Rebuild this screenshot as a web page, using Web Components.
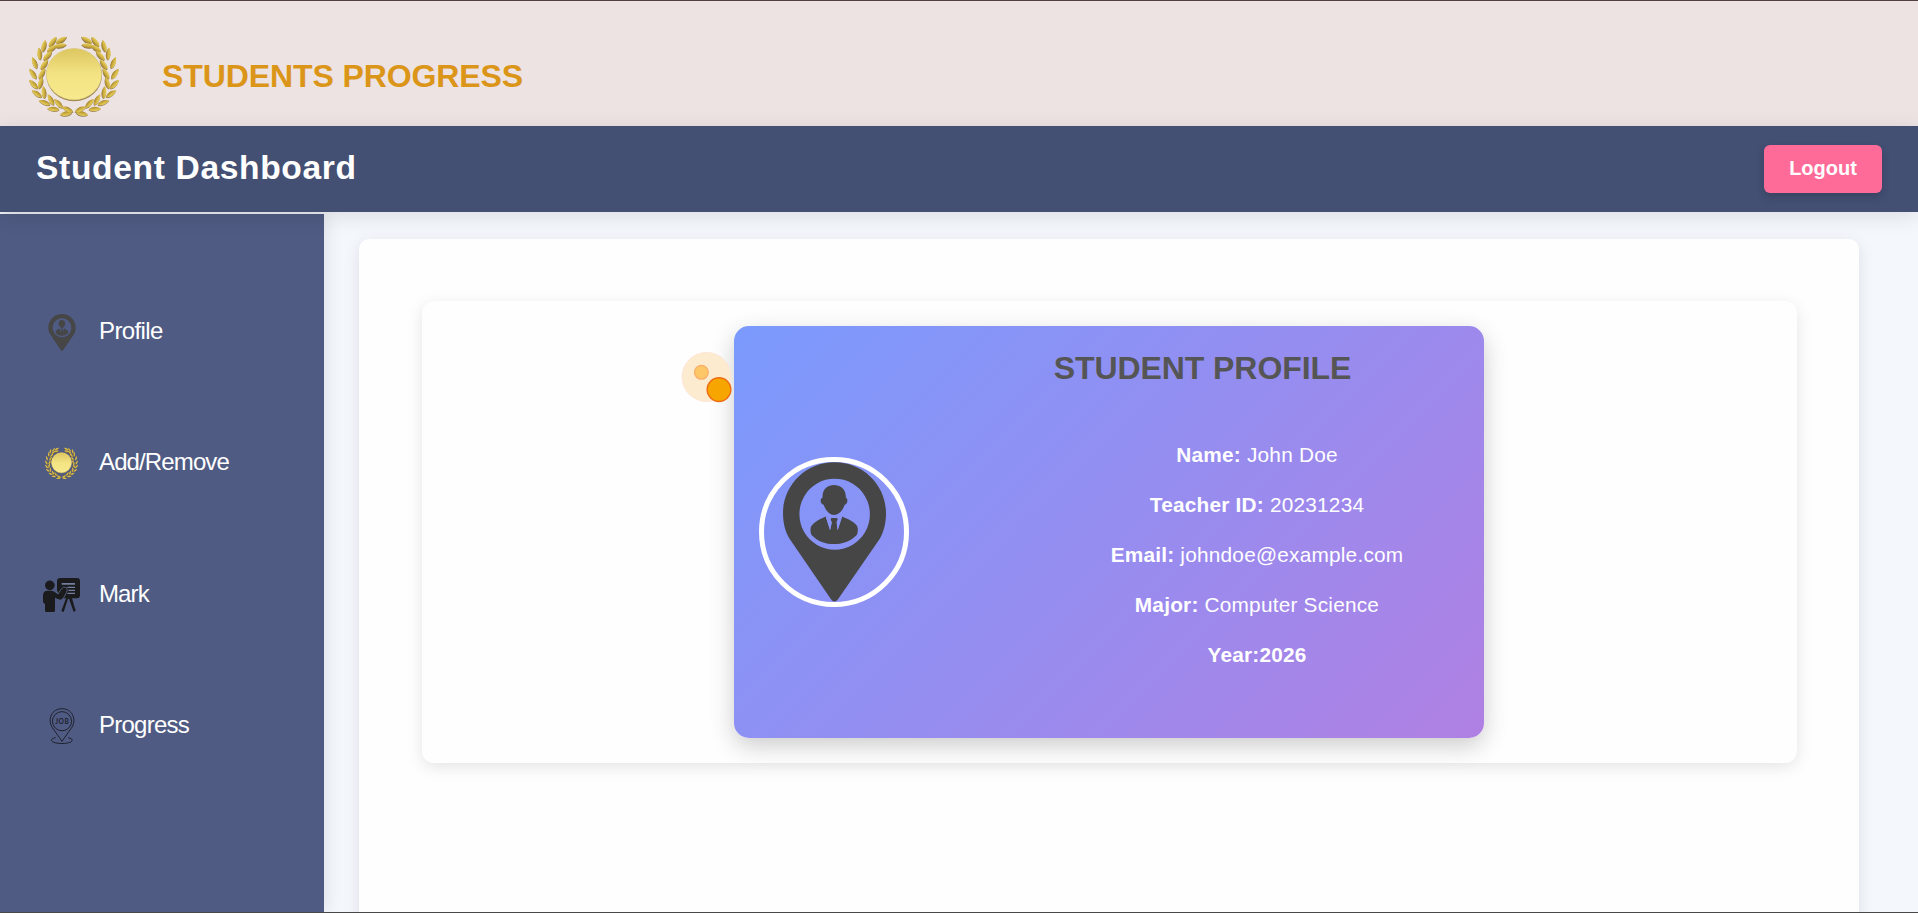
<!DOCTYPE html>
<html lang="en">
<head>
<meta charset="utf-8">
<title>Student Dashboard</title>
<style>
html,body{margin:0;height:100%;overflow:hidden}
body{font-family:"Liberation Sans",Arial,sans-serif;background:#f4f7fc}
</style>
</head>
<body>
<student-app></student-app>
<script>
function define(name, html, setup){
  const t=document.createElement('template');
  t.innerHTML=html;
  customElements.define(name, class extends HTMLElement{
    constructor(){
      super();
      this.attachShadow({mode:'open'}).appendChild(t.content.cloneNode(true));
    }
    connectedCallback(){ if(setup) setup(this,this.shadowRoot); }
  });
}

define('pin-icon', `
<style>:host{display:block}svg{display:block;width:100%;height:100%}</style>
<svg viewBox="338 458 307 416" preserveAspectRatio="xMidYMid meet" fill="#464646">
<path fill-rule="evenodd" d="M491.500 458C406 458 338 526 338 610C338 639 345 666 358 687L480 865Q491.500 882 503 865L626 687C639 664 645 639 645 610C645 526 577 458 491.500 458ZM492 507A105 106 0 1 1 491.900 507Z"/>
<path d="M456 563C454 538 472 526 490 526C508 526 527 538 525 563C532 566 532 582 522 585C516 602 504 615 490 615C477 615 465 602 459 585C448 582 448 566 456 563Z"/>
<path d="M465 620L479 660L483 636L480 627L484 624H497L501 627L497 636L501 660L514 620C541 631 561 643 561 656C561 672 559 674 552 680C536 695 514 702 490 702C465 702 444 695 429 680C422 674 420 672 420 656C422 642 440 631 465 620Z"/>
<path d="M466 621L478 661L484 640L483 636L480 628L472 620ZM514 621L501 661L498 640L498 634L503 624Z" fill="#8793f6"/>
<path d="M484 624H497L501 628L497 636L499 661H482L484 636L480 628Z"/>
</svg>`, (host,root)=>{
  const c=host.getAttribute('cut');
  if(c) root.querySelectorAll('path')[3].setAttribute('fill',c);
});

define('wreath-icon', `
<style>:host{display:block}svg{display:block;width:100%;height:100%;overflow:visible}</style>
<svg viewBox="26 22 271 234" preserveAspectRatio="none">
<defs>
<linearGradient id="d" x1="0" y1="0" x2="0" y2="1"><stop offset="0" stop-color="#dcc660"/><stop offset=".5" stop-color="#f3e383"/><stop offset="1" stop-color="#f7ea8d"/></linearGradient>
<linearGradient id="l" x1="0" y1="0" x2="0" y2="1"><stop offset="0" stop-color="#e6cf62"/><stop offset=".5" stop-color="#d2b544"/><stop offset="1" stop-color="#a9872c"/></linearGradient>
</defs>
<ellipse cx="162" cy="134" rx="84" ry="78" fill="#9b8548"/>
<ellipse cx="161.500" cy="132" rx="83" ry="76" fill="url(#d)" stroke="#eadb98" stroke-width="1.500"/>
<g id="L"></g><g id="R" transform="translate(323 0) scale(-1 1)"></g>
</svg>`, (host,root)=>{
  const leaves=[[123,31,-25],[97,37,-48],[71,49,-72],[58,72,-92],[43,99,-108],[38,131,-121],[40,162,-132],[50,190,-142],[73,216,-157],[99,235,-172],[137,249,-187],
    [120,48,-5],[95,56,-30],[82,78,-42],[72,104,-50],[65,131,-56],[61,158,-70],[71,186,-92],[92,208,-115],[115,219,-130],[142,236,-152]];
  const s=leaves.map(([x,y,a])=>'<path transform="translate('+x+' '+y+') rotate('+a+')" d="M-18 1C-13 -8 5 -10 19 -2C9 8 -8 10 -18 1Z"/>').join('');
  for(const id of ['L','R']){
    const g=root.getElementById(id);
    g.innerHTML='<g fill="#745625" opacity=".75" transform="translate(1 2)">'+s+'</g><g fill="url(#l)">'+s+'</g>';
  }
});

define('board-icon', `
<style>:host{display:block}svg{display:block;width:100%;height:100%}</style>
<svg viewBox="129 54 111 102" fill="#1b1b1d">
<circle cx="149.500" cy="76" r="14.500"/>
<path fill-rule="evenodd" d="M181 54H231Q240 54 240 63V105Q240 115 231 115H216L227 152L221 156L207 116H204L191 156L184 153L198 115H178L171 90V63Q171 54 181 54Z"/>
<path d="M185 69H225V74H185ZM201 80H225V84H203ZM205 89H225V93H206ZM204 98H225V102H201Z" fill="#747d9d"/>
<path d="M129 107Q129 92 143 92H155Q160 92 165 97L176 104L184 90Q190 80 197 85Q202 88 198 96L188 114Q184 121 176 118L165 113V152Q165 156 160 156H139Q135 156 135 152V132Q129 131 129 124Z"/>
<path d="M168 96L175 101L183 88Q190 77 199 83Q204 88 200 97L190 115" fill="none" stroke="#5d678c" stroke-width="2.500"/>
</svg>`);

define('job-icon', `
<style>:host{display:block}svg{display:block;width:100%;height:100%}text{font:bold 20px Lato,"Liberation Sans",sans-serif}</style>
<svg viewBox="146 443 77 109" fill="none" stroke="#1d202c" stroke-width="3">
<path d="M165 533C145 536 147 550 184 550.500C222 550 222 536 203 533"/>
<path d="M184.500 544L155 502C139 477 154 445 184.500 445C215 445 230 477 214 502Z"/>
<circle cx="184.500" cy="483" r="29"/>
<text x="184.500" y="491" text-anchor="middle" fill="#1d202c" stroke="none" textLength="41">JOB</text>
</svg>`);

define('brand-header', `
<style>
:host{display:flex;align-items:flex-start;height:126px;box-sizing:border-box;background:#ede3e2;border-top:1px solid #54403f;padding:36px 0 0 29px}
wreath-icon{width:90px;height:79px}
h1{margin:21px 0 0 43px;font-size:32px;line-height:37px;letter-spacing:-.1px;color:#db9518;font-weight:bold}
</style>
<wreath-icon></wreath-icon><h1><slot></slot></h1>`);

define('top-nav', `
<style>
:host{display:flex;align-items:center;justify-content:space-between;height:86px;box-sizing:border-box;padding:0 36px;background:#434f73;box-shadow:0 4px 20px rgba(0,0,0,.11);position:relative;z-index:2}
h2{margin:0;color:#fff;font-size:33.600px;letter-spacing:.65px;line-height:38px;padding-bottom:2px}
button{font:bold 20px/23px "Liberation Sans",Arial,sans-serif;color:#fff;background:#ff6b98;border:0;border-radius:6px;width:118px;height:48px;padding:0 0 2px;box-shadow:0 4px 8px rgba(0,0,0,.15)}
</style>
<h2><slot></slot></h2><button>Logout</button>`);

define('side-item', `
<style>
:host{display:flex;align-items:center;height:37px}
.icon{width:37px;height:37px;display:grid;place-items:center;margin-right:19px}
span{color:#fff;font-size:24px;line-height:28px;letter-spacing:var(--ls,-.7px);white-space:nowrap;padding-bottom:3px}
::slotted(*){width:var(--w,37px);height:var(--h,37px)}
</style>
<div class="icon"><slot name="icon"></slot></div><span><slot></slot></span>`);

define('side-bar', `
<style>
:host{display:flex;flex-direction:column;gap:94.300px;width:324px;box-sizing:border-box;margin-top:2px;padding:100px 0 0 43px;background:#4f5b83;box-shadow:2px 0 16px rgba(0,0,0,.1);flex:none}
</style>
<side-item style="--w:28px;--h:37px;--ls:-.6px"><pin-icon slot="icon" cut="#4f5b83"></pin-icon>Profile</side-item>
<side-item style="--w:33px;--h:31px;--ls:-.88px"><wreath-icon slot="icon"></wreath-icon>Add/Remove</side-item>
<side-item style="--w:37px;--h:34px;--ls:-.9px"><board-icon slot="icon"></board-icon>Mark</side-item>
<side-item style="--w:26px;--h:36px;--ls:-.75px"><job-icon slot="icon"></job-icon>Progress</side-item>`);

define('profile-field', `
<style>
:host{display:block;text-align:center;color:#fff;font-size:20.800px;letter-spacing:.22px;line-height:24px}
</style>
<slot></slot>`);

define('profile-card', `
<style>
:host{display:flex;width:750px;height:412px;box-sizing:border-box;padding:25px;border-radius:15px;background:linear-gradient(135deg,#7b9afd,#b080e3);box-shadow:0 8px 24px rgba(0,0,0,.2);align-items:center;justify-content:space-between;position:relative}
.avatar{width:150px;height:150px;box-sizing:border-box;border:5px solid #fff;border-radius:50%;display:grid;place-items:center;margin-top:0}
pin-icon{width:103px;height:140px}
.info{width:513px;align-self:stretch}
h2{margin:-1px 0 0;text-align:center;font-size:32px;line-height:37px;letter-spacing:-.08px;color:#555;font-weight:bold}
.fields{margin:56px 0 0 109px;display:flex;flex-direction:column;gap:26px;padding-left:0;white-space:nowrap}
.ripple{position:absolute;left:-53px;top:25px;width:52px;height:52px}
</style>
<div class="avatar"><pin-icon></pin-icon></div>
<div class="info"><h2>STUDENT PROFILE</h2>
<div class="fields">
<profile-field><b>Name:</b> John Doe</profile-field>
<profile-field><b>Teacher ID:</b> 20231234</profile-field>
<profile-field><b>Email:</b> johndoe@example.com</profile-field>
<profile-field><b>Major:</b> Computer Science</profile-field>
<profile-field><b>Year:2026</b></profile-field>
</div></div>
<svg class="ripple" viewBox="0 0 52 52"><circle cx="25.600" cy="26" r="24.500" fill="#fdebcf" stroke="#fde6d6"/><circle cx="20.400" cy="21.300" r="6.800" fill="#fdc767" stroke="#fab169" stroke-width="1.500"/><circle cx="38" cy="38.600" r="11.800" fill="#f7a501" stroke="#ee6d12" stroke-width="1.500"/></svg>`);

define('content-panel', `
<style>
:host{display:block;flex:1;margin:27px 59px 0 35px;padding:62px 62px 0 63px;box-sizing:border-box;height:800px;background:#fefefe;border-radius:10px;box-shadow:0 4px 16px rgba(0,0,0,.1)}
.inner{height:462px;box-sizing:border-box;padding:25px 1px 0 0;border-radius:12px;background:#fefefe;box-shadow:0 4px 16px rgba(0,0,0,.1);display:flex;justify-content:center;align-items:flex-start}
</style>
<div class="inner"><slot></slot></div>`);

define('student-app', `
<style>
:host{display:flex;flex-direction:column;height:913px;overflow:hidden;box-sizing:border-box;border-bottom:1px solid #484848}
.body{display:flex;flex:1;min-height:0;overflow:hidden}
</style>
<brand-header>STUDENTS PROGRESS</brand-header>
<top-nav>Student Dashboard</top-nav>
<div class="body"><side-bar></side-bar><content-panel><profile-card></profile-card></content-panel></div>`);
</script>
</body>
</html>
